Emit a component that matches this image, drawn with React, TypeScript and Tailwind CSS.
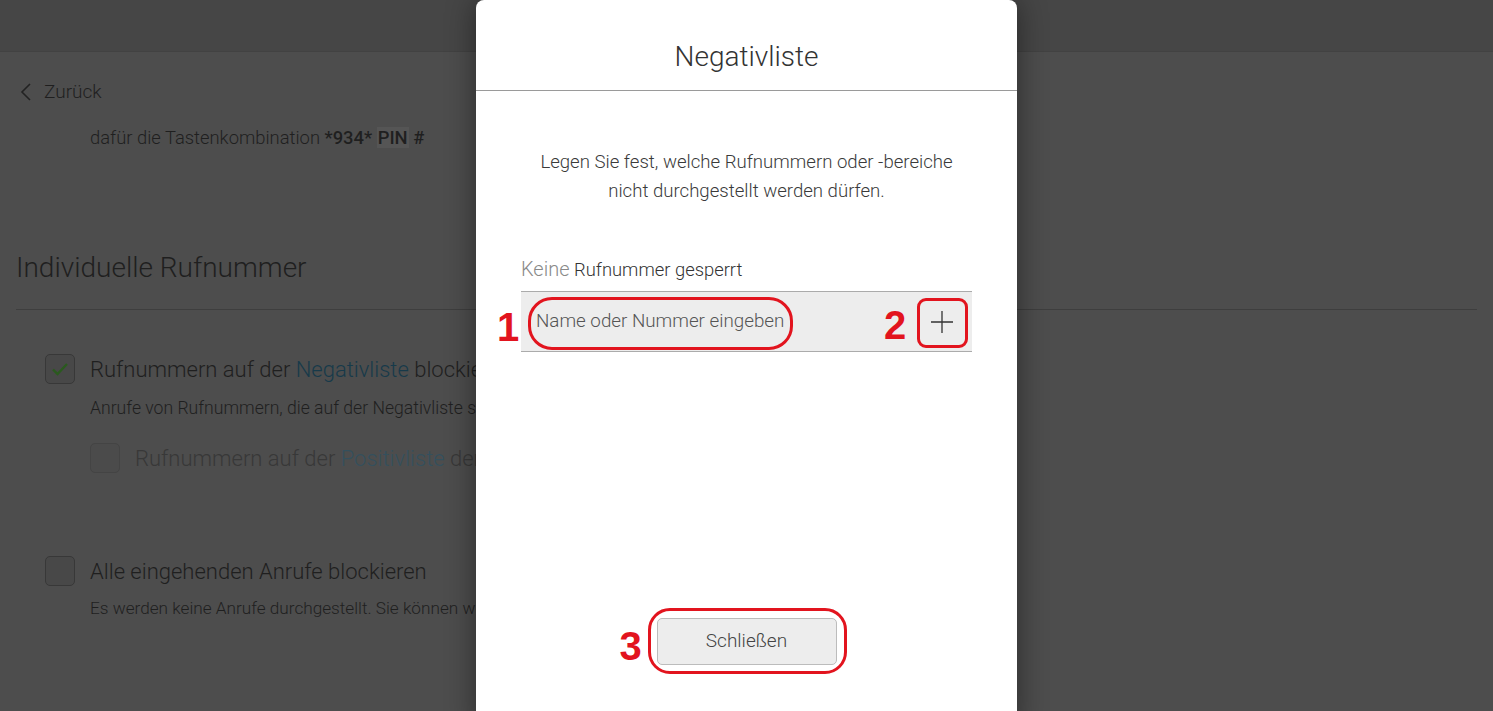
import React from 'react'

const font = { fontFamily: 'Roboto, "Liberation Sans", Arial, sans-serif' }

const Checkbox = ({ checked, faded }: { checked?: boolean; faded?: boolean }) => (
	<div className={`w-[30px] h-[30px] shrink-0 rounded-[5px] border flex items-center justify-center ${faded ? 'border-[#444] bg-[#4b4b4b]' : 'border-[#383838] bg-[#484848]'}`}>
		{checked && (
			<svg width="18" height="14" viewBox="0 0 18 14">
				<path d="M2 7.5 L6.5 12 L16 2" fill="none" stroke="#2a5a1e" strokeWidth="2.4" />
			</svg>
		)}
	</div>
)

const Background = () => (
	<div className="h-full w-full bg-[#4d4d4d] text-[#1f1f1f] font-light">
		<header className="h-[52px] bg-[#464646] border-b border-[#424242]" />
		<div className="pl-[20px] mt-[28px] h-[24px] flex items-center gap-[12px] text-[19px]">
			<svg width="12" height="18" viewBox="0 0 12 18">
				<path d="M10 1 L2 9 L10 17" fill="none" stroke="#222" strokeWidth="1.6" />
			</svg>
			<span>Zurück</span>
		</div>
		<p className="pl-[90px] mt-[22px] text-[18.4px] leading-[24px]">
			dafür die Tastenkombination <b className="font-medium">*934*</b>{' '}
			<span className="font-medium bg-[#555] px-[1px]">PIN</span>{' '}
			<b className="font-medium">#</b>
		</p>
		<h2 className="pl-[16px] mt-[101px] text-[28px] leading-[34px]">Individuelle Rufnummer</h2>
		<div className="mx-[16px] mt-[24px] border-t border-[#3e3e3e]" />
		<div className="pl-[45px] mt-[44px]">
			<div className="flex items-center gap-[15px] text-[22px] h-[30px]">
				<Checkbox checked />
				<span>
					Rufnummern auf der <span className="text-[#173a4a]">Negativliste</span> blockieren
				</span>
			</div>
			<p className="pl-[45px] mt-[13px] text-[17.6px] leading-[22px]">Anrufe von Rufnummern, die auf der Negativliste stehen, werden nicht durchgestellt.</p>
			<div className="pl-[45px] mt-[24px] flex items-center gap-[15px] text-[22px] h-[30px] text-[#383838]">
				<Checkbox faded />
				<span>
					Rufnummern auf der <span className="text-[#34505d]">Positivliste</span> den Vorrang geben
				</span>
			</div>
			<div className="mt-[83px] flex items-center gap-[15px] text-[22px] h-[30px]">
				<Checkbox />
				<span>Alle eingehenden Anrufe blockieren</span>
			</div>
			<p className="pl-[45px] mt-[11px] text-[17.2px] leading-[22px]">Es werden keine Anrufe durchgestellt. Sie können weiterhin selbst anrufen.</p>
		</div>
	</div>
)

const Num = ({ n, className }: { n: string; className: string }) => (
	<span className={`absolute text-[40px] leading-none font-bold text-[#e2141e] ${className}`} style={{ fontFamily: '"Liberation Sans", Arial, sans-serif' }}>
		{n}
	</span>
)

const App = () => {
	return (
		<main className="relative h-screen w-full overflow-hidden" style={font}>
			<Background />
			<div className="absolute inset-0 flex justify-center">
				<section className="w-[541px] h-[730px] bg-white rounded-t-[8px] shadow-[0_0_30px_rgba(0,0,0,0.45)] flex flex-col text-[#3a3a3a] font-light">
					<div className="h-[91px] pt-[24px] flex items-center justify-center border-b border-[#9a9a9a] text-[28px] text-[#333]">
						Negativliste
					</div>
					<div className="px-[45px] flex flex-col">
						<p className="mt-[57px] text-center text-[18.6px] leading-[29px]">
							Legen Sie fest, welche Rufnummern oder -bereiche
							<br />
							nicht durchgestellt werden dürfen.
						</p>
						<p className="mt-[51px] text-[18.4px] leading-[24px] text-[#333]">
							<span className="text-[20px] text-[#8a8a8a]">Keine</span> Rufnummer gesperrt
						</p>
						<div className="relative mt-[9px] h-[61px] bg-[#ededed] border-y border-[#ababab] flex items-center justify-between pl-[15px] pr-[18px]">
							<span className="text-[18.8px] text-[#555]">Name oder Nummer eingeben</span>
							<svg width="24" height="24" viewBox="0 0 24 24">
								<path d="M12 1 V23 M1 12 H23" stroke="#333" strokeWidth="1.3" />
							</svg>
							<Num n="1" className="left-[-24px] top-[15px]" />
							<div className="absolute left-[7px] top-[5px] w-[265px] h-[53px] rounded-[24px] border-[3px] border-[#e2141e]" />
							<Num n="2" className="left-[363px] top-[13px]" />
							<div className="absolute left-[396px] top-[6px] w-[51px] h-[50px] rounded-[9px] border-[3px] border-[#e2141e]" />
						</div>
					</div>
					<div className="mt-[266px] flex justify-center">
						<div className="relative">
							<button className="w-[180px] h-[47px] rounded-[5px] bg-[#ededed] border border-[#bcbcbc] text-[19px] text-[#444] font-light">
								Schließen
							</button>
							<Num n="3" className="left-[-37px] top-[8px]" />
							<div className="absolute left-[-9px] top-[-10px] w-[199px] h-[66px] rounded-[22px] border-[3px] border-[#e2141e]" />
						</div>
					</div>
				</section>
			</div>
		</main>
	)
}

export default App
